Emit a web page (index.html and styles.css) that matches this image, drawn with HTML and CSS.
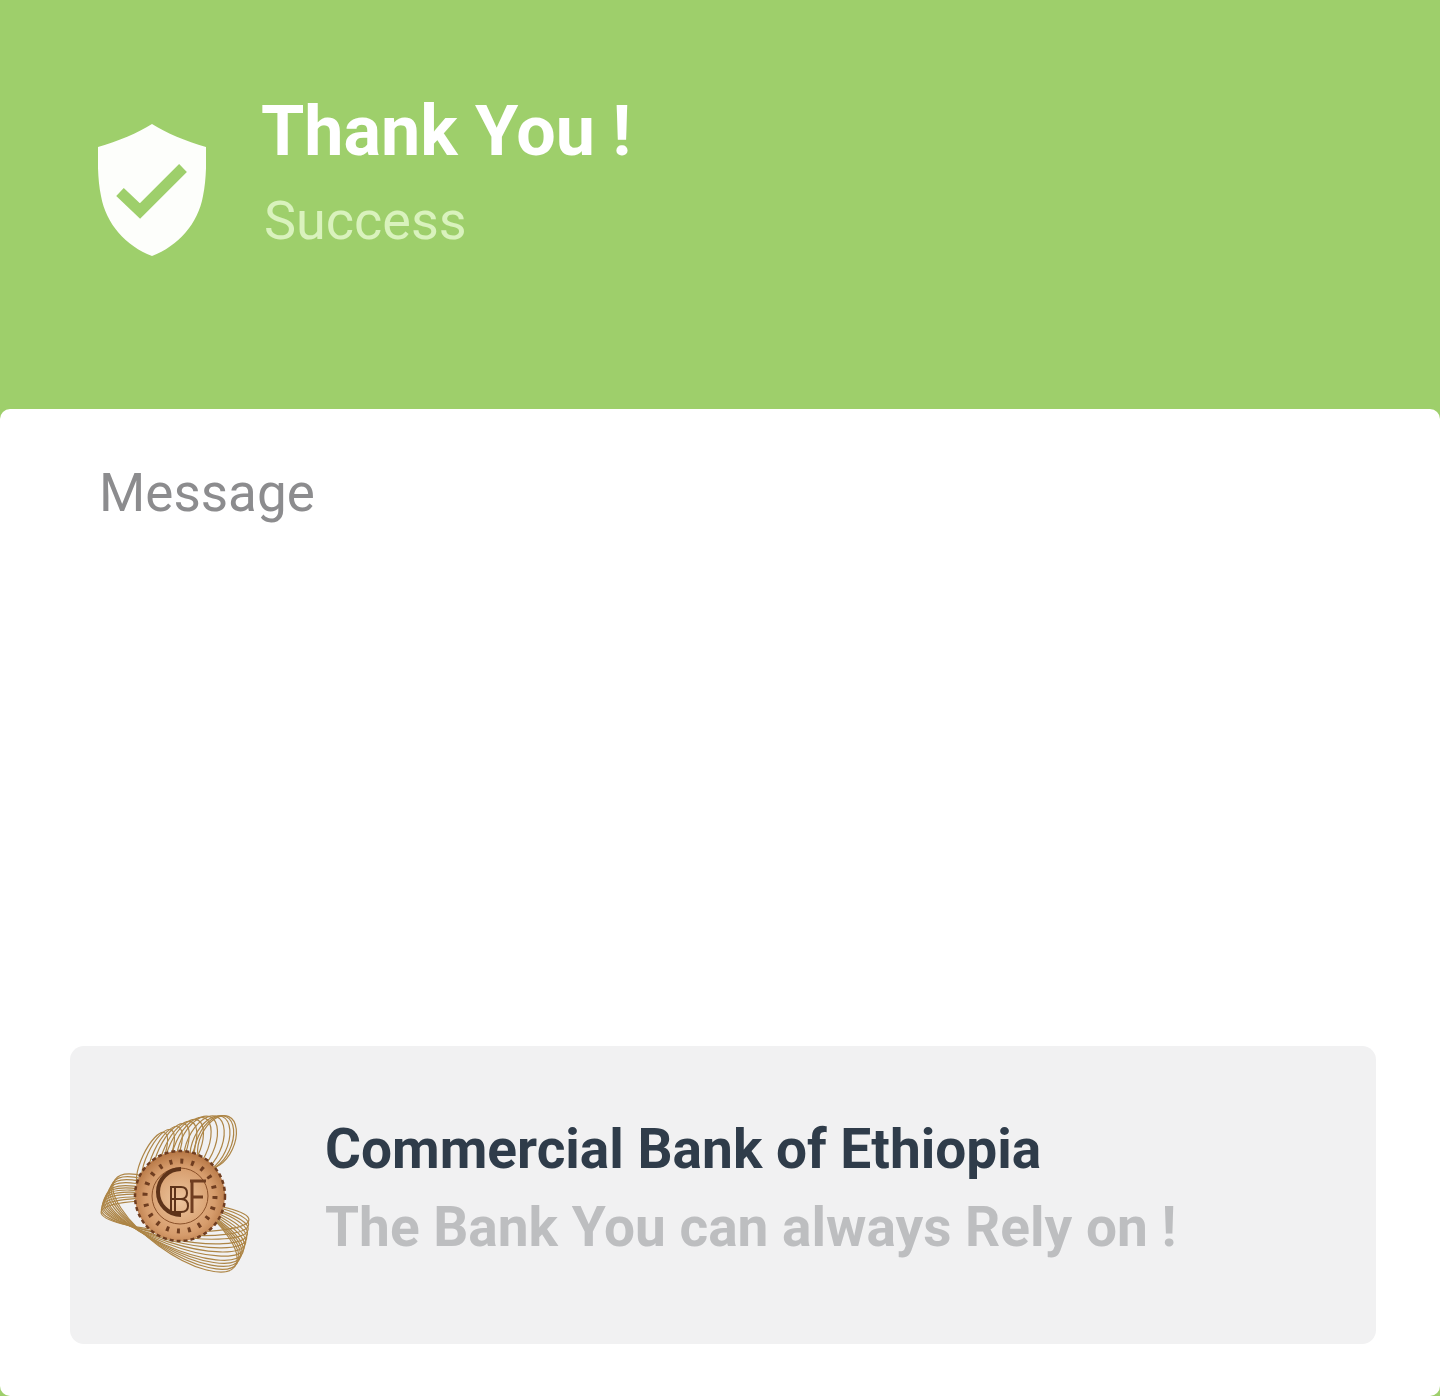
FILE: index.html
```html
<!DOCTYPE html>
<html lang="en">
<head>
    <meta charset="UTF-8">
    <meta name="viewport" content="width=device-width, initial-scale=1.0">
    <title>Thank You</title>
    <link rel="stylesheet" href="styles.css">
</head>
<body>
    <header class="banner">
        <svg class="shield" viewBox="0 0 108 132" aria-hidden="true">
            <path d="M54 0 C68 9 88 17 108 23 C108.500 40 108 58 105 72 C100 100 80 122 54 132 C28 122 8 100 3 72 C0 58 -0.500 40 0 23 C20 17 40 9 54 0 Z" fill="#fdfefb"/>
            <path d="M22 68 L42 87 L85 44" fill="none" stroke="#9ecf6b" stroke-width="11"/>
        </svg>
        <div class="banner-text">
            <h1>Thank You !</h1>
            <p>Success</p>
        </div>
    </header>
    <main class="card">
        <p class="message">Message</p>
        <section class="bank">
            <svg class="bank-logo" viewBox="0 0 160 170" aria-hidden="true">
                <defs>
                    <radialGradient id="coinFill" cx="50%" cy="55%" r="55%">
                        <stop offset="0" stop-color="#ecc49c"/>
                        <stop offset="0.700" stop-color="#d69c6c"/>
                        <stop offset="1" stop-color="#b57644"/>
                    </radialGradient>
                </defs>
                <g fill="none" stroke="#ad8546" stroke-width="1.200">
                    <ellipse cx="54" cy="50" rx="10" ry="30" transform="rotate(25 54 50)"/>
                    <ellipse cx="60" cy="48" rx="11" ry="31" transform="rotate(25 60 48)"/>
                    <ellipse cx="67" cy="46" rx="12" ry="32" transform="rotate(25 67 46)"/>
                    <ellipse cx="73" cy="44" rx="13" ry="33" transform="rotate(25 73 44)"/>
                    <ellipse cx="80" cy="42" rx="14" ry="33" transform="rotate(25 80 42)"/>
                    <ellipse cx="86" cy="40" rx="15" ry="33" transform="rotate(25 86 40)"/>
                    <ellipse cx="93" cy="38" rx="16" ry="33" transform="rotate(25 93 38)"/>
                    <ellipse cx="99" cy="36" rx="17" ry="32" transform="rotate(25 99 36)"/>
                    <ellipse cx="106" cy="35" rx="17" ry="31" transform="rotate(25 106 35)"/>
                    <ellipse cx="112" cy="34" rx="17" ry="30" transform="rotate(25 112 34)"/>
                    <ellipse cx="116" cy="33" rx="17" ry="29" transform="rotate(25 116 33)"/>
                    <ellipse cx="119" cy="32" rx="17" ry="28" transform="rotate(25 119 32)"/>
                    <ellipse cx="77" cy="106" rx="74" ry="15" transform="rotate(3 77 106)"/>
                    <ellipse cx="77" cy="107" rx="74" ry="17" transform="rotate(6 77 107)"/>
                    <ellipse cx="77" cy="108" rx="74" ry="18" transform="rotate(9 77 108)"/>
                    <ellipse cx="77" cy="109" rx="74" ry="20" transform="rotate(12 77 109)"/>
                    <ellipse cx="77" cy="110" rx="74" ry="21" transform="rotate(15 77 110)"/>
                    <ellipse cx="77" cy="111" rx="74" ry="22" transform="rotate(18 77 111)"/>
                    <ellipse cx="77" cy="112" rx="74" ry="23" transform="rotate(21 77 112)"/>
                    <ellipse cx="77" cy="113" rx="74" ry="24" transform="rotate(24 77 113)"/>
                    <ellipse cx="77" cy="113" rx="74" ry="25" transform="rotate(27 77 113)"/>
                    <ellipse cx="77" cy="113" rx="74" ry="26" transform="rotate(30 77 113)"/>
                    <ellipse cx="77" cy="113" rx="74" ry="27" transform="rotate(33 77 113)"/>
                    <ellipse cx="77" cy="113" rx="74" ry="28" transform="rotate(36 77 113)"/>
                </g>
                <circle cx="82" cy="86" r="45" fill="url(#coinFill)" stroke="#6f3d20" stroke-width="2.500" stroke-dasharray="4 3"/>
                <circle cx="82" cy="86" r="35" fill="none" stroke="#6f3d20" stroke-width="5" stroke-dasharray="3 8"/>
                <circle cx="82" cy="86" r="28" fill="none" stroke="#8a5029" stroke-width="1"/>
                <path d="M83 59 A23 23 0 1 0 83 105" fill="none" stroke="#5e3319" stroke-width="4"/>
                <path d="M73 77 H83 Q89 77 89 83 Q89 89 83 89 Q90 89 90 96 Q90 102 83 102 H73 Z M77 77 V102 M73 89 H83" fill="none" stroke="#5e3319" stroke-width="2"/>
                <path d="M92 71 H108 M94 71 V103 M94 87 H105" fill="none" stroke="#6f3d20" stroke-width="3"/>
            </svg>
            <div class="bank-text">
                <h2>Commercial Bank of Ethiopia</h2>
                <p>The Bank You can always Rely on !</p>
            </div>
        </section>
    </main>
</body>
</html>
```

FILE: styles.css
```css
html, body {
    height: 100%;
}
body {
    font-family: Roboto, "Liberation Sans", sans-serif;
    margin: 0;
    padding: 0;
    background-color: #9ecf6b;
    display: flex;
    flex-direction: column;
}
.banner {
    display: flex;
    align-items: flex-start;
    height: 409px;
    box-sizing: border-box;
    padding: 91px 0 0 98px;
    color: white;
}
.shield {
    width: 108px;
    height: 132px;
    margin-top: 33px;
    flex: none;
}
.banner-text {
    margin-left: 55px;
}
.banner-text h1 {
    margin: 0;
    font-size: 70px;
    line-height: 80px;
    font-weight: 700;
}
.banner-text p {
    margin: 18px 0 0 3px;
    font-size: 54px;
    line-height: 64px;
    font-weight: 400;
    color: #d9f2bd;
}
.card {
    flex: 1;
    display: flex;
    flex-direction: column;
    background: white;
    border-radius: 10px;
}
.message {
    margin: 0;
    padding: 52px 0 0 99px;
    font-size: 53px;
    line-height: 64px;
    color: #8c8c8e;
}
.bank {
    display: flex;
    align-items: center;
    height: 298px;
    margin: auto 64px 52px 70px;
    padding-left: 28px;
    box-sizing: border-box;
    background-color: #f1f1f2;
    border-radius: 14px;
}
.bank-logo {
    width: 160px;
    height: 170px;
    flex: none;
}
.bank-text {
    margin-left: 67px;
    padding-bottom: 14px;
}
.bank-text h2 {
    margin: 0;
    font-size: 55px;
    line-height: 64px;
    font-weight: 700;
    color: #2f3c4a;
}
.bank-text p {
    margin: 14px 0 0;
    font-size: 55px;
    line-height: 64px;
    font-weight: 700;
    color: #bdbec0;
}
```
